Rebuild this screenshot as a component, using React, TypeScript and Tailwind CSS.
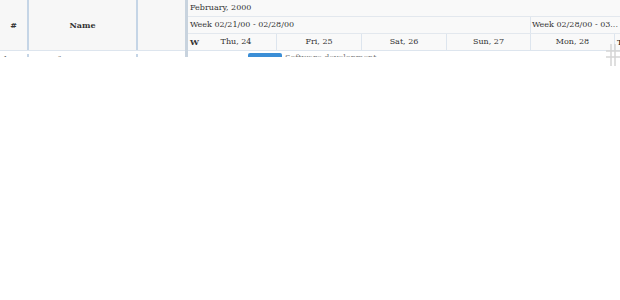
import React from "react";

const days = [
  { label: "W", w: 8, align: "left" },
  { label: "Thu, 24", w: 81 },
  { label: "Fri, 25", w: 85 },
  { label: "Sat, 26", w: 85 },
  { label: "Sun, 27", w: 84 },
  { label: "Mon, 28", w: 84 },
  { label: "T", w: 20, align: "left" },
];

export default function App() {
  return (
    <div className="relative w-[620px] h-[300px] bg-white" style={{ fontFamily: "'DejaVu Serif', serif" }}>
      <div className="flex h-[57px] overflow-hidden text-[#333]">
        {/* grid */}
        <div className="flex w-[185px] shrink-0 flex-col">
          <div className="flex h-[51px] shrink-0 border-b border-[#dde5ee] bg-[#f7f7f7] text-[8px] font-bold">
            <div className="flex w-[29px] items-center justify-center border-r-2 border-[#c5d5e6]">#</div>
            <div className="flex w-[109px] items-center justify-center border-r-2 border-[#c5d5e6]">Name</div>
            <div className="flex-1"></div>
          </div>
          <div className="flex h-[20px] shrink-0 pt-[3px] text-[8px] text-[#555]">
            <div className="flex w-[29px] pl-[3px] border-r-2 border-[#c5d5e6]">1</div>
            <div className="flex w-[109px] justify-center pl-[18px] border-r-2 border-[#c5d5e6]">Software development</div>
            <div className="flex-1"></div>
          </div>
        </div>

        {/* splitter */}
        <div className="w-[3px] shrink-0 bg-[#c8d3de]"></div>

        {/* timeline */}
        <div className="flex min-w-0 flex-1 flex-col">
          <div className="flex h-[17px] shrink-0 items-center border-b border-[#e3e8ee] bg-[#f9f9f9] pl-[2px] text-[8px] whitespace-nowrap">
            February, 2000
          </div>
          <div className="flex h-[17px] shrink-0 border-b border-[#e3e8ee] bg-[#f9f9f9] text-[8px] whitespace-nowrap">
            <div className="flex w-[343px] shrink-0 items-center border-r border-[#dde5ee] pl-[2px]">Week 02/21/00 - 02/28/00</div>
            <div className="flex flex-1 items-center overflow-hidden pl-[1px]">Week 02/28/00 - 03...</div>
          </div>
          <div className="flex h-[17px] shrink-0 border-b border-[#dde5ee] bg-[#f9f9f9] text-[8px] whitespace-nowrap">
            {days.map((d, i) => (
              <div
                key={i}
                className={
                  d.align === "left"
                    ? "flex shrink-0 items-center font-bold pl-[2px]"
                    : "flex shrink-0 items-center justify-center border-r border-[#dde5ee]"
                }
                style={{ width: d.w }}
              >
                {d.label}
              </div>
            ))}
          </div>
          <div className="flex h-[20px] shrink-0 items-start pt-[2px]">
            <div className="w-[60px] shrink-0"></div>
            <div className="h-[10px] w-[34px] shrink-0 rounded-[2px] bg-[#3b8ed6]"></div>
            <div className="pl-[3px] pt-[1px] text-[8px] text-[#777] leading-[8px] whitespace-nowrap">Software development</div>
          </div>
        </div>
      </div>

      {/* hash cursor overlay */}
      <svg className="absolute left-[604px] top-[44px]" width="16" height="22" viewBox="0 0 16 22">
        <g stroke="#d4d4d4" strokeWidth="1.5" fill="none">
          <line x1="7" y1="0" x2="7" y2="22" />
          <line x1="11" y1="0" x2="11" y2="22" />
          <line x1="2" y1="7" x2="16" y2="7" />
          <line x1="2" y1="13" x2="16" y2="13" />
        </g>
      </svg>
    </div>
  );
}
